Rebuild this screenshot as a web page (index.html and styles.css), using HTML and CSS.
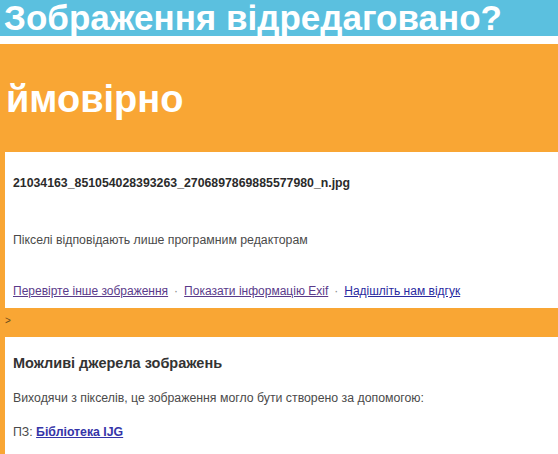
FILE: index.html
```html
<!DOCTYPE html>
<html lang="uk">
<head>
<meta charset="utf-8">
<title>Зображення відредаговано?</title>
<link rel="stylesheet" href="styles.css">
</head>
<body>
<header class="top">Зображення відредаговано?</header>
<main class="result">
  <h1 class="verdict">ймовірно</h1>
  <section class="card card-main">
    <p class="filename">21034163_851054028393263_2706897869885577980_n.jpg</p>
    <p class="note">Пікселі відповідають лише програмним редакторам</p>
    <p class="links"><a class="visited" href="#">Перевірте інше зображення</a><span class="sep">·</span><a class="visited" href="#">Показати інформацію Exif</a><span class="sep">·</span><a href="#">Надішліть нам відгук</a></p>
  </section>
  <div class="toggle">&gt;</div>
  <section class="card card-sources">
    <h2 class="sources-title">Можливі джерела зображень</h2>
    <p class="note">Виходячи з пікселів, це зображення могло бути створено за допомогою:</p>
    <p class="note">ПЗ: <a class="strong-link" href="#">Бібліотека IJG</a></p>
  </section>
</main>
</body>
</html>
```

FILE: styles.css
```css
html, body {
  margin: 0;
  padding: 0;
  background: #ffffff;
  font-family: "Liberation Sans", Arial, sans-serif;
  overflow: hidden;
}

.top {
  display: block;
  height: 36px;
  line-height: 36px;
  background: #5bc0df;
  color: #ffffff;
  font-size: 35px;
  font-weight: bold;
  padding-left: 4px;
  margin-bottom: 8px;
  white-space: nowrap;
}

.result {
  background: #f9a634;
  padding-left: 5px;
  min-height: 410px;
}

.verdict {
  margin: 0;
  height: 72px;
  padding-top: 36px;
  font-size: 38px;
  line-height: 38px;
  color: #ffffff;
  font-weight: bold;
  padding-left: 1px;
}

.card {
  background: #ffffff;
  padding-left: 8px;
}

.card p {
  margin: 0;
}

.card-main {
  padding-top: 23px;
  padding-bottom: 9px;
}

.filename {
  font-size: 12.3px;
  line-height: 16px;
  font-weight: bold;
  color: #2b2b2b;
}

.card-main .note {
  margin-top: 41px;
}

.note {
  font-size: 12.3px;
  line-height: 16px;
  color: #4a4a4a;
}

.links {
  margin-top: 35px !important;
  font-size: 12px;
  line-height: 16px;
  color: #888888;
  white-space: nowrap;
}

.sep {
  display: inline-block;
  margin: 0 6px;
}

.links a {
  color: #2a2aa0;
}

.links a.visited {
  color: #5a3a8a;
}

.toggle {
  height: 29px;
  line-height: 26px;
  font-size: 10px;
  color: #6b4a1a;
  margin-left: -5px;
  padding-left: 5px;
}

.card-sources {
  padding-top: 17px;
  padding-bottom: 30px;
}

.sources-title {
  margin: 0;
  font-size: 14.5px;
  line-height: 18px;
  font-weight: bold;
  color: #333333;
}

.card-sources .note {
  margin-top: 18px;
}

.strong-link {
  color: #3434a8;
  font-weight: bold;
}
```
